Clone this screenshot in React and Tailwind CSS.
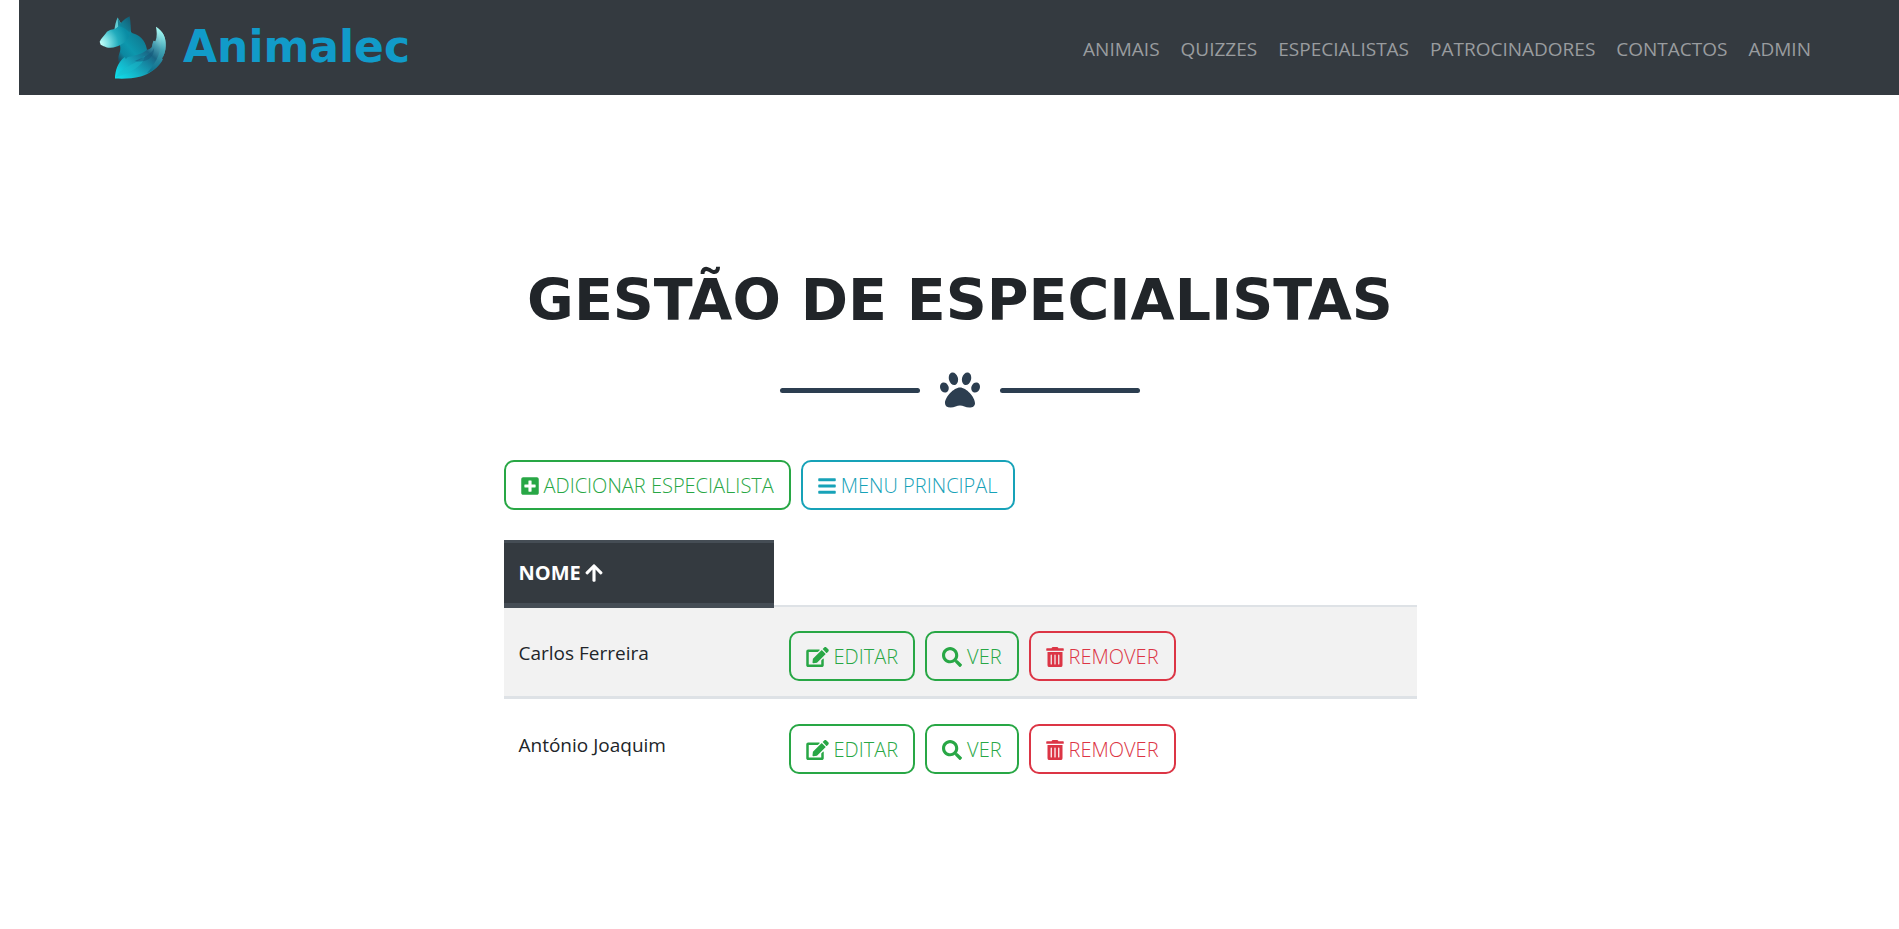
import { FaArrowUp, FaBars, FaEdit, FaPaw, FaPlusSquare, FaSearch, FaTrashAlt } from 'react-icons/fa';

const NAV = ['ANIMAIS', 'QUIZZES', 'ESPECIALISTAS', 'PATROCINADORES', 'CONTACTOS', 'ADMIN'];
const EXPERTS = ['Carlos Ferreira', 'António Joaquim'];

const TONES = {
  green: 'border-[#28a745] text-[#28a745]',
  teal: 'border-[#17a2b8] text-[#17a2b8]',
  red: 'border-[#dc3545] text-[#dc3545]',
};

function FoxLogo() {
  return (
    <svg viewBox="40 30 205 195" className="h-[65px] w-[68px]" aria-hidden="true">
      <defs>
        <radialGradient id="head" gradientUnits="userSpaceOnUse" cx="44" cy="116" r="100">
          <stop offset="0" stopColor="#c8fffa" />
          <stop offset="0.25" stopColor="#7de0e4" />
          <stop offset="0.55" stopColor="#22acbd" />
          <stop offset="0.85" stopColor="#0a8ca4" />
          <stop offset="1" stopColor="#0b8ba3" />
        </radialGradient>
        <linearGradient id="chest" gradientUnits="userSpaceOnUse" x1="170" y1="100" x2="98" y2="160">
          <stop offset="0" stopColor="#0f7c93" />
          <stop offset="0.5" stopColor="#0d97ad" />
          <stop offset="0.8" stopColor="#0c87a0" />
          <stop offset="1" stopColor="#1a5268" />
        </linearGradient>
        <linearGradient id="ear" x1="0" y1="1" x2="1" y2="0">
          <stop offset="0" stopColor="#0f97ad" />
          <stop offset="1" stopColor="#145a72" />
        </linearGradient>
        <linearGradient id="tail" gradientUnits="userSpaceOnUse" x1="95" y1="222" x2="225" y2="75">
          <stop offset="0" stopColor="#10e0ec" />
          <stop offset="0.25" stopColor="#14b4c8" />
          <stop offset="0.5" stopColor="#15809c" />
          <stop offset="0.62" stopColor="#1a6685" />
          <stop offset="0.78" stopColor="#4a9fb2" />
          <stop offset="1" stopColor="#b5fff8" />
        </linearGradient>
        <linearGradient id="edge" gradientUnits="userSpaceOnUse" x1="225" y1="75" x2="190" y2="195">
          <stop offset="0" stopColor="#9af6f2" />
          <stop offset="0.45" stopColor="#3fa5b5" />
          <stop offset="1" stopColor="#0e6f8c" />
        </linearGradient>
      </defs>
      <path d="M86 76 C88 62 91 48 96 37 L108 58 Z" fill="#62ccd3" />
      <path d="M96 37 L108 58 L98 66 Z" fill="#1c8194" />
      <path d="M98 108 C106 124 106 134 101 146 C97 156 97 164 101 174 L186 148 C186 124 176 98 152 88 C144 86 138 84 134 78 Z" fill="url(#chest)" />
      <path d="M42 110 C46 100 56 92 64 80 C74 72 86 74 94 68 C104 58 122 48 134 60 L136 80 C132 98 118 114 104 120 C96 124 88 128 74 128 C58 128 54 122 45 119 Z" fill="url(#head)" />
      <path d="M99 64 C108 48 120 40 132 33 C136 50 137 66 132 82 C122 72 112 64 99 64 Z" fill="url(#ear)" />
      <path d="M88 221 C89 196 96 172 118 156 L121 162 L127 156 C150 152 168 148 184 135 C194 132 201 128 200 120 L204 107 L210 109 C216 94 214 80 212 65 C234 80 242 98 241 122 C241 138 236 152 230 160 L232 164 C220 188 196 206 166 215 C140 222 112 222 88 221 Z" fill="url(#tail)" />
      <path d="M212 65 C234 80 242 98 241 122 C241 138 236 152 230 160 L232 164 C224 182 204 198 184 206 C206 180 226 150 226 116 C226 96 220 80 212 65 Z" fill="url(#edge)" opacity="0.8" />
      <path d="M90 218 C106 184 150 180 178 152 C176 184 130 204 90 218 Z" fill="#19bccd" opacity="0.45" />
      <path d="M148 168 C176 158 198 148 206 130 C206 160 180 176 148 168 Z" fill="#14587a" opacity="0.5" />
    </svg>
  );
}

function Button({ tone, icon, children }) {
  return (
    <button type="button" className={`flex h-[50px] items-center gap-[5px] rounded-[10px] border-2 px-[15px] pt-0.5 text-xl font-light whitespace-nowrap ${TONES[tone]}`}>
      {icon}
      {children}
    </button>
  );
}

export default function App() {
  return (
    <div className="flex min-h-screen flex-col bg-white font-['Open_Sans',sans-serif] text-[#212529]">
      <header className="ml-[19px] flex h-[95px] items-center justify-between bg-[#343a40] px-20">
        <a href="#inicio" className="flex items-center gap-4">
          <FoxLogo />
          <span className="pb-0.5 font-['DejaVu_Sans',sans-serif] text-[44px] leading-none font-bold text-[#119bc9]">Animalec</span>
        </a>
        <nav className="mr-2 flex gap-[21px] pt-0.5">
          {NAV.map((item) => (
            <a key={item} href={`#${item.toLowerCase()}`} className="text-[19px] leading-8 text-[#999c9f]">
              {item}
            </a>
          ))}
        </nav>
      </header>

      <div className="pl-[21px]">
        <main className="mx-auto w-1/2 px-[13px] pt-[169px]">
          <h1 className="text-center font-['DejaVu_Sans',sans-serif] text-[57px] leading-[72px] font-bold whitespace-nowrap">GESTÃO DE ESPECIALISTAS</h1>

          <div className="mt-[34px] flex items-center justify-center gap-5 text-[#2c3e50]">
            <span className="h-[5px] w-[140px] rounded-sm bg-[#2c3e50]" />
            <FaPaw className="size-10" />
            <span className="h-[5px] w-[140px] rounded-sm bg-[#2c3e50]" />
          </div>

          <div className="mt-[50px] flex gap-[10px]">
            <Button tone="green" icon={<FaPlusSquare className="h-5 w-[18px]" />}>ADICIONAR ESPECIALISTA</Button>
            <Button tone="teal" icon={<FaBars className="h-5 w-[18px]" />}>MENU PRINCIPAL</Button>
          </div>

          <table className="mt-[30px] w-full border-collapse text-[19px]">
            <thead>
              <tr className="h-16">
                <th scope="col" className="w-[270px] border-t-[3px] border-b-[5px] border-[#454d55] bg-[#343a40] px-[15px] text-left text-xl font-bold text-white">
                  <span className="flex items-center gap-1">
                    NOME <FaArrowUp className="h-5 w-[18px]" />
                  </span>
                </th>
                <td className="border-b-2 border-[#dee2e6]" />
              </tr>
            </thead>
            <tbody>
              {EXPERTS.map((name) => (
                <tr key={name} className="h-[92px] border-[#dee2e6] odd:bg-[#f2f2f2] even:border-t-[3px]">
                  <td className="px-[15px] pt-0.5">{name}</td>
                  <td className="px-[15px] pt-[10px]">
                    <div className="flex gap-[10px]">
                      <Button tone="green" icon={<FaEdit className="h-5 w-[23px]" />}>EDITAR</Button>
                      <Button tone="green" icon={<FaSearch className="size-5" />}>VER</Button>
                      <Button tone="red" icon={<FaTrashAlt className="h-5 w-[18px]" />}>REMOVER</Button>
                    </div>
                  </td>
                </tr>
              ))}
            </tbody>
          </table>
        </main>
      </div>
    </div>
  );
}
